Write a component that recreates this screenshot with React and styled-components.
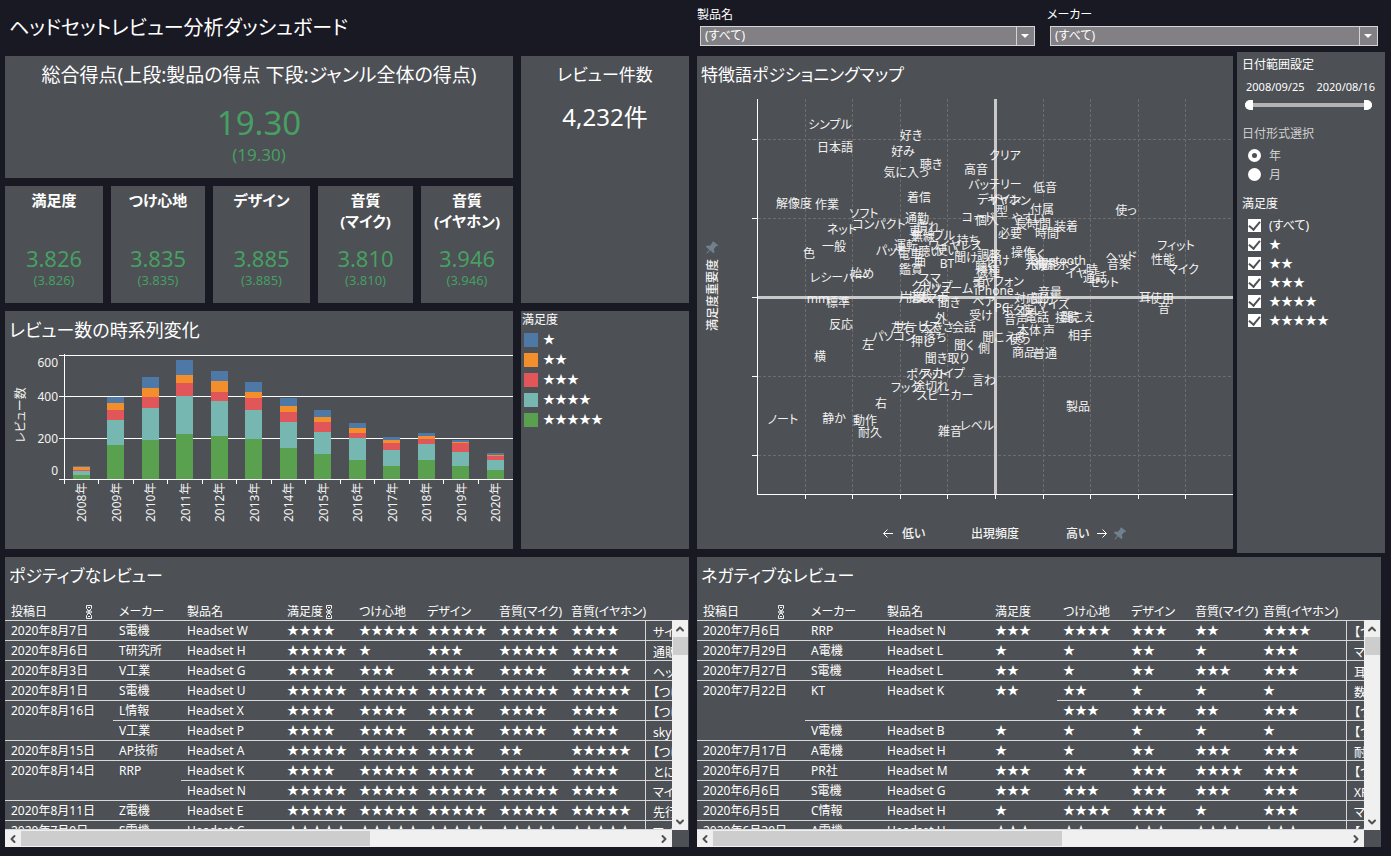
import { useState } from 'react';
import styled, { createGlobalStyle } from 'styled-components';
import { ChevronUp, ChevronDown, ChevronLeft, ChevronRight } from 'lucide-react';

const RATINGS = [1, 2, 3, 4, 5];
const RATING_COLORS = ['#4e79a7', '#f28e2b', '#e15759', '#76b7b2', '#59a14f'];

const stars = (n) => '★'.repeat(n);

const subScores = [
  { name: ['満足度'], value: '3.826' },
  { name: ['つけ心地'], value: '3.835' },
  { name: ['デザイン'], value: '3.885' },
  { name: ['音質', '(マイク)'], value: '3.810' },
  { name: ['音質', '(イヤホン)'], value: '3.946' },
];

// counts go from ★★★★★ at the bottom of the stack to ★ at the top
const reviewCounts = [
  { year: 2008, counts: [21, 19, 5, 15, 5] },
  { year: 2009, counts: [166, 121, 48, 34, 29] },
  { year: 2010, counts: [190, 155, 53, 44, 53] },
  { year: 2011, counts: [219, 184, 63, 39, 73] },
  { year: 2012, counts: [210, 169, 44, 53, 48] },
  { year: 2013, counts: [195, 140, 58, 29, 48] },
  { year: 2014, counts: [152, 126, 44, 29, 39] },
  { year: 2015, counts: [123, 106, 48, 24, 34] },
  { year: 2016, counts: [94, 102, 29, 24, 24] },
  { year: 2017, counts: [65, 73, 34, 15, 15] },
  { year: 2018, counts: [94, 77, 24, 15, 15] },
  { year: 2019, counts: [65, 68, 39, 5, 10] },
  { year: 2020, counts: [45, 48, 19, 5, 10] },
];

const words = [
  ['シンプル', 130, 25], ['日本語', 135, 48], ['好き', 211, 36], ['好み', 203, 52],
  ['聴き', 231, 65], ['気に入っ', 206, 73], ['高音', 276, 70], ['クリア', 305, 56],
  ['バッテリー', 295, 85], ['低音', 345, 88], ['解像度', 94, 104], ['作業', 127, 105],
  ['着信', 219, 98], ['デザイン', 299, 100], ['イヤホン', 309, 101], ['型', 302, 112],
  ['付属', 342, 110], ['使っ', 426, 111], ['ソフト', 164, 114], ['コンパクト', 179, 125],
  ['通勤', 217, 119], ['コード', 278, 118], ['個人', 287, 121], ['やすい', 328, 119],
  ['長時間', 333, 125], ['装着', 366, 127], ['ネット', 142, 130], ['車', 215, 132],
  ['慣れ', 228, 128], ['無線', 223, 137], ['ケーブル', 233, 136], ['必要', 310, 134],
  ['時間', 347, 134], ['一般', 134, 147], ['色', 109, 154], ['パッド', 191, 151],
  ['運転', 206, 146], ['電車', 210, 155], ['聴い', 230, 152], ['曲', 220, 162],
  ['ワイヤレス', 255, 146], ['持ち', 268, 141], ['使い', 247, 151], ['BT', 247, 164],
  ['聞け', 266, 158], ['調整', 289, 156], ['付け', 298, 161], ['操作', 323, 153],
  ['長く', 335, 155], ['Bluetooth', 358, 161], ['充電', 337, 165], ['機能', 347, 165],
  ['ヘッドホン', 353, 166], ['フィット', 476, 146], ['ヘッド', 421, 157], ['音楽', 419, 165],
  ['性能', 463, 160], ['マイク', 483, 170], ['レシーバー', 138, 178], ['始め', 162, 174],
  ['鑑賞', 211, 170], ['スマ', 230, 179], ['クリップ', 232, 187], ['ボリューム', 246, 189],
  ['聴く', 285, 167], ['機種', 288, 172], ['頭', 279, 183], ['イヤフォン', 298, 182],
  ['iPhone', 294, 191], ['イヤ', 376, 174], ['時', 392, 170], ['通話', 395, 178],
  ['セット', 404, 183], ['mm', 118, 199], ['標準', 138, 203], ['片耳', 211, 198],
  ['搭載', 220, 198], ['スマホ', 232, 199], ['聞き', 249, 203], ['ペア', 284, 202],
  ['PC', 302, 208], ['音量', 350, 193], ['対応', 326, 199], ['部分', 343, 199],
  ['サイズ', 353, 205], ['ボタン', 318, 211], ['使い', 333, 211], ['耳', 445, 198],
  ['使用', 462, 199], ['音', 464, 209], ['反応', 141, 225], ['外', 241, 219],
  ['受け', 281, 216], ['音声', 316, 220], ['電話', 337, 218], ['接続', 367, 218],
  ['聞こえ', 378, 218], ['左右', 203, 228], ['サービス', 217, 227], ['大きさ', 237, 228],
  ['会話', 264, 228], ['本体', 329, 231], ['声', 349, 231], ['パソコン', 194, 237],
  ['落ち', 235, 238], ['押し', 222, 242], ['聞こえる', 304, 238], ['使う', 320, 240],
  ['相手', 380, 236], ['左', 168, 245], ['聞く', 264, 246], ['側', 284, 249],
  ['横', 120, 257], ['聞き取り', 247, 259], ['商品', 324, 253], ['普通', 345, 254],
  ['ポケット', 227, 275], ['スカイプ', 243, 274], ['言わ', 284, 281], ['フック', 206, 288],
  ['途切れ', 231, 287], ['スピーカー', 245, 296], ['右', 181, 304], ['製品', 378, 307],
  ['ノート', 83, 320], ['静か', 134, 319], ['動作', 165, 321], ['耐久', 170, 333],
  ['雑音', 250, 332], ['レベル', 277, 326],
];

const headers = ['投稿日', 'メーカー', '製品名', '満足度', 'つけ心地', 'デザイン', '音質(マイク)', '音質(イヤホン)'];

// a cell is a value, or [value, rowSpan]; cells covered by a span above are left out
const positiveRows = [
  ['2020年8月7日', 'S電機', 'Headset W', 4, 5, 5, 5, 4, 'サイズ'],
  ['2020年8月6日', 'T研究所', 'Headset H', 5, 1, 3, 5, 4, '通販'],
  ['2020年8月3日', 'V工業', 'Headset G', 4, 3, 4, 4, 5, 'ヘッド'],
  ['2020年8月1日', 'S電機', 'Headset U', 5, 5, 5, 5, 5, '【つけ心地】'],
  [['2020年8月16日', 2], 'L情報', 'Headset X', 4, 4, 4, 4, 4, '【つけ心地】'],
  ['V工業', 'Headset P', 4, 4, 4, 4, 4, 'skype'],
  ['2020年8月15日', 'AP技術', 'Headset A', 5, 5, 4, 2, 5, '【つけ心地】'],
  [['2020年8月14日', 2], ['RRP', 2], 'Headset K', 4, 5, 4, 4, 4, 'とにかく'],
  ['Headset N', 5, 5, 5, 5, 4, 'マイク'],
  ['2020年8月11日', 'Z電機', 'Headset E', 5, 5, 5, 5, 5, '先行'],
  ['2020年7月9日', 'S電機', 'Headset C', 5, 5, 5, 5, 5, 'マイク'],
];

const negativeRows = [
  ['2020年7月6日', 'RRP', 'Headset N', 3, 4, 3, 2, 4, '【つけ心地】'],
  ['2020年7月29日', 'A電機', 'Headset L', 1, 1, 2, 1, 3, 'マイク'],
  ['2020年7月27日', 'S電機', 'Headset L', 2, 1, 2, 3, 3, '耳'],
  [['2020年7月22日', 3], ['KT', 2], ['Headset K', 2], [2, 2], 2, 1, 1, 1, '数'],
  [3, 3, 2, 3, '【つけ心地】'],
  ['V電機', 'Headset B', 1, 1, 1, 1, 1, '【つけ心地】'],
  ['2020年7月17日', 'A電機', 'Headset H', 1, 1, 2, 3, 3, '耐久'],
  ['2020年6月7日', 'PR社', 'Headset M', 3, 2, 3, 4, 3, '【つけ心地】'],
  ['2020年6月6日', 'S電機', 'Headset G', 3, 3, 3, 3, 3, 'XP'],
  ['2020年6月5日', 'C情報', 'Headset H', 1, 4, 3, 1, 3, 'マイク'],
  ['2020年6月30日', 'A電機', 'Headset U', 3, 2, 3, 4, 3, '【つけ心地】'],
];

const SortIcon = () => (
  <SortSvg width="8" height="14" viewBox="0 0 8 14" aria-hidden="true">
    <path d="M1.5 .5h5v3l-2 2 2 1v1l-2 1 2 2v3h-5v-3l2-2-2-1v-1l2-1-2-2z" />
    <path d="M3 2.5h2M3 11.5h2M3 5l2 4M5 5l-2 4" />
  </SortSvg>
);

const Pin = ({ x, y }) => (
  <g transform={`translate(${x} ${y}) rotate(40)`} fill="#71808f">
    <path d="M-3-6h6v1.5h-1v4l2.500 2v1.500h-4.500v4l-.5 1-.5-1v-4h-4.500v-1.500l2.500-2v-4h-1z" />
  </g>
);

const TimeChart = () => {
  const base = 134;
  const scale = 124 / 600;
  const step = 34.5;
  return (
    <Chart viewBox="0 0 508 204" role="img" aria-label="レビュー数の時系列変化">
      <g stroke="#fff" shapeRendering="crispEdges">
        {[10.5, 51.5, 93.5].map((y) => (
          <path key={y} d={`M54 ${y}H508`} />
        ))}
      </g>
      <g shapeRendering="crispEdges">
        {reviewCounts.map(({ year, counts }, i) => {
          let top = base;
          return counts.map((count, k) => {
            const height = count * scale;
            top -= height;
            return (
              <rect
                key={`${year}-${k}`}
                x={Math.floor(68 + step * i)}
                y={top}
                width="17"
                height={height}
                fill={RATING_COLORS[4 - k]}
              />
            );
          });
        })}
      </g>
      <g stroke="#fff" shapeRendering="crispEdges">
        <path d="M54 134.500H508M59.500 9V139" />
        {reviewCounts.slice(1).map(({ year }, i) => (
          <path key={year} d={`M${Math.floor(59 + step * (i + 1)) + 0.5} 134V139`} />
        ))}
      </g>
      <g textAnchor="end">
        <text x="53" y="22">600</text>
        <text x="53" y="56">400</text>
        <text x="53" y="98">200</text>
        <text x="53" y="130">0</text>
      </g>
      <text transform="translate(20 70) rotate(-90)" textAnchor="middle">レビュー数</text>
      {reviewCounts.map(({ year }, i) => (
        <text key={year} transform={`translate(${81 + step * i} 177) rotate(-90)`}>{year}年</text>
      ))}
    </Chart>
  );
};

const PositionMap = () => (
  <Chart viewBox="-3 -4 536 453" role="img" aria-label="特徴語ポジショニングマップ">
    <g stroke="#6d6e6b" strokeDasharray="3 2" shapeRendering="crispEdges">
      {[105.5, 152.5, 200.5, 247.5, 343.5, 390.5, 438.5, 485.5].map((x) => (
        <path key={x} d={`M${x} -1V394`} />
      ))}
      {[39.5, 118.5, 276.5, 355.5].map((y) => (
        <path key={y} d={`M58 ${y}H533`} />
      ))}
    </g>
    <g stroke="#c9c9c9" strokeWidth="3">
      <path d="M58 197.500H533M295.500 -1V394" />
    </g>
    <g stroke="#fff" shapeRendering="crispEdges">
      <path d="M57.500 -1V394.500H533" fill="none" />
      {[39.5, 118.5, 197.5, 276.5, 355.5].map((y) => (
        <path key={y} d={`M52 ${y}H57`} />
      ))}
      {[105.5, 152.5, 200.5, 247.5, 295.5, 343.5, 390.5, 438.5, 485.5].map((x) => (
        <path key={x} d={`M${x} 395V399`} />
      ))}
    </g>
    <g textAnchor="middle">
      {words.map(([word, x, y]) => (
        <text key={`${word}${x}`} x={x} y={y + 4}>{word}</text>
      ))}
    </g>
    <AxisText>
      <text x="202" y="438">低い</text>
      <text x="271" y="438">出現頻度</text>
      <text x="366" y="438">高い</text>
      <text transform="translate(17 231) rotate(-90)">満足度重要度</text>
    </AxisText>
    <path d="M193 433.500h-9.500m4-4l-4 4 4 4M397 433.500h9.500m-4-4l4 4-4 4" fill="none" stroke="#fff" />
    <Pin x={12} y={148} />
    <Pin x={420} y={434} />
  </Chart>
);

const ReviewTable = ({ title, rows, widths, sorted }) => (
  <ReviewPanel>
    <PanelTitle>{title}</PanelTitle>
    <ScrollGrid>
      <Viewport>
        <Table>
          <colgroup>
            {widths.map((width, i) => (
              <Col key={i} $width={width} />
            ))}
            <Col $width={100} />
          </colgroup>
          <thead>
            <tr>
              {headers.map((header, i) => (
                <Th key={header} scope="col">
                  <HeadCell $spread={i === 0}>
                    {header}
                    {sorted.includes(i) && <SortIcon />}
                  </HeadCell>
                </Th>
              ))}
              <Th aria-label="レビュー" />
            </tr>
          </thead>
          <tbody>
            {rows.map((row, r) => (
              <tr key={r}>
                {row.map((cell, c) => {
                  const [value, span] = Array.isArray(cell) ? cell : [cell, 1];
                  if (c === row.length - 1) return <ReviewCell key={c}>{value}</ReviewCell>;
                  return (
                    <Td key={c} rowSpan={span} $top={span > 1}>
                      {typeof value === 'number' ? stars(value) : value}
                    </Td>
                  );
                })}
              </tr>
            ))}
          </tbody>
        </Table>
      </Viewport>
      <VerticalBar>
        <ScrollButton type="button" aria-label="上へ"><ChevronUp size={12} strokeWidth={4} /></ScrollButton>
        <VerticalThumb />
        <ScrollButton type="button" aria-label="下へ"><ChevronDown size={12} strokeWidth={4} /></ScrollButton>
      </VerticalBar>
      <HorizontalBar>
        <ScrollButton type="button" aria-label="左へ"><ChevronLeft size={12} strokeWidth={4} /></ScrollButton>
        <HorizontalTrack><HorizontalThumb /></HorizontalTrack>
        <ScrollButton type="button" aria-label="右へ"><ChevronRight size={12} strokeWidth={4} /></ScrollButton>
      </HorizontalBar>
    </ScrollGrid>
  </ReviewPanel>
);

const Filters = () => {
  const [format, setFormat] = useState('年');
  const [checked, setChecked] = useState(RATINGS);
  const all = checked.length === RATINGS.length;

  const toggle = (n) =>
    setChecked((prev) => (prev.includes(n) ? prev.filter((v) => v !== n) : [...prev, n]));

  return (
    <FilterPanel>
      <FilterTitle>日付範囲設定</FilterTitle>
      <Dates>
        <span>2008/09/25</span>
        <span>2020/08/16</span>
      </Dates>
      <RangeTrack>
        <Range type="range" min="0" max="100" defaultValue="0" aria-label="開始日" $side="start" />
        <Range type="range" min="0" max="100" defaultValue="100" aria-label="終了日" $side="end" />
      </RangeTrack>
      <FilterGroup $gap={18}>
        <FilterLegend $muted>日付形式選択</FilterLegend>
        {['年', '月'].map((value) => (
          <Option key={value} $muted>
            <Radio name="format" checked={format === value} onChange={() => setFormat(value)} />
            {value}
          </Option>
        ))}
      </FilterGroup>
      <FilterGroup $gap={11}>
        <FilterLegend>満足度</FilterLegend>
        <Option>
          <Check checked={all} onChange={() => setChecked(all ? [] : RATINGS)} />
          (すべて)
        </Option>
        {RATINGS.map((n) => (
          <Option key={n}>
            <Check checked={checked.includes(n)} onChange={() => toggle(n)} />
            {stars(n)}
          </Option>
        ))}
      </FilterGroup>
    </FilterPanel>
  );
};

const App = () => (
  <>
    <GlobalStyle />
    <Page>
      <Column $grow={684}>
        <Header>
          <PageTitle>ヘッドセットレビュー分析ダッシュボード</PageTitle>
        </Header>
        <SummaryGrid>
          <Scores>
            <TotalPanel>
              <CenterTitle $size={19}>総合得点(上段:製品の得点 下段:ジャンル全体の得点)</CenterTitle>
              <TotalValue>19.30</TotalValue>
              <TotalNote>(19.30)</TotalNote>
            </TotalPanel>
            <SubScores>
              {subScores.map(({ name, value }) => (
                <SubPanel key={value}>
                  <SubName>{name.map((line) => <span key={line}>{line}</span>)}</SubName>
                  <SubValue>{value}</SubValue>
                  <SubNote>({value})</SubNote>
                </SubPanel>
              ))}
            </SubScores>
          </Scores>
          <CountPanel>
            <CenterTitle>レビュー件数</CenterTitle>
            <CountValue>4,232件</CountValue>
          </CountPanel>
          <Panel>
            <ChartTitle $size={18}>レビュー数の時系列変化</ChartTitle>
            <TimeChart />
          </Panel>
          <Panel>
            <LegendTitle>満足度</LegendTitle>
            <LegendList>
              {RATINGS.map((n) => (
                <li key={n}>
                  <Swatch $color={RATING_COLORS[n - 1]} />
                  {stars(n)}
                </li>
              ))}
            </LegendList>
          </Panel>
        </SummaryGrid>
        <ReviewTable
          title="ポジティブなレビュー"
          rows={positiveRows}
          widths={[108, 68, 100, 72, 68, 72, 72, 80]}
          sorted={[0, 3]}
        />
      </Column>
      <Column $grow={688}>
        <SelectBar>
          <Field>
            製品名
            <SelectBox>
              <Select><option>(すべて)</option></Select>
            </SelectBox>
          </Field>
          <Field>
            メーカー
            <SelectBox>
              <Select><option>(すべて)</option></Select>
            </SelectBox>
          </Field>
        </SelectBar>
        <MapRow>
          <MapPanel>
            <PanelTitle>特徴語ポジショニングマップ</PanelTitle>
            <PositionMap />
          </MapPanel>
          <Filters />
        </MapRow>
        <TableInset>
          <ReviewTable
            title="ネガティブなレビュー"
            rows={negativeRows}
            widths={[108, 76, 108, 68, 68, 64, 68, 89]}
            sorted={[0]}
          />
        </TableInset>
      </Column>
    </Page>
  </>
);

const GlobalStyle = createGlobalStyle`
  * {
    box-sizing: border-box;
  }

  body {
    margin: 0;
    background: #191924;
    color: #fff;
    font-family: 'Noto Sans', 'Noto Sans CJK JP', sans-serif;
    font-size: 12px;
    line-height: 20px;
    font-feature-settings: 'palt';
  }
`;

const Page = styled.main`
  display: flex;
  gap: 8px;
  padding: 0 6px 8px 5px;
`;

const Column = styled.div`
  flex: ${({ $grow }) => $grow} 1 0;
  min-width: 0;
`;

const Header = styled.header`
  display: flex;
  align-items: center;
  height: 56px;
`;

const PageTitle = styled.h1`
  margin: 0 4px;
  font-size: 20px;
  font-weight: 400;
  line-height: 32px;
  white-space: nowrap;
`;

const SummaryGrid = styled.div`
  display: grid;
  grid-template-columns: minmax(0, 508fr) minmax(0, 168fr);
  gap: 8px;
  margin-bottom: 8px;
`;

const Panel = styled.section`
  background: #4d5054;
  overflow: hidden;
`;

const Scores = styled.div`
  display: flex;
  flex-direction: column;
  gap: 8px;
`;

const TotalPanel = styled(Panel)`
  height: 122px;
  text-align: center;
`;

const CountPanel = styled(Panel)`
  text-align: center;
`;

const PanelTitle = styled.h2`
  margin: 0;
  padding: 5px 4px 0;
  height: 40px;
  font-size: ${({ $size = 17 }) => $size}px;
  font-weight: 400;
  line-height: 28px;
  white-space: nowrap;
`;

const ChartTitle = styled(PanelTitle)`
  height: 34px;
`;

const CenterTitle = styled(PanelTitle)`
  padding: 5px 0 0;
`;

const TotalValue = styled.div`
  padding-top: 4px;
  color: #479f62;
  font-size: 33px;
  line-height: 46px;
`;

const TotalNote = styled.div`
  color: #479f62;
  font-size: 17px;
  line-height: 18px;
`;

const CountValue = styled.div`
  font-size: 24px;
  line-height: 42px;
`;

const SubScores = styled.div`
  display: grid;
  grid-template-columns: 98fr 94fr 97fr 95fr 92fr;
  gap: 8px;
`;

const SubPanel = styled(Panel)`
  height: 117px;
  padding-top: 4px;
  text-align: center;
`;

const SubName = styled.h3`
  display: flex;
  flex-direction: column;
  height: 52px;
  margin: 0;
  font-size: 15px;
  font-weight: 700;
  line-height: 21px;
`;

const SubValue = styled.div`
  color: #479f62;
  font-size: 22px;
  line-height: 32px;
`;

const SubNote = styled.div`
  color: #479f62;
  font-size: 13px;
  line-height: 12px;
`;

const Chart = styled.svg`
  display: block;
  width: 100%;
  height: auto;

  text {
    fill: #f2f2f2;
    font-size: 12px;
  }
`;

const AxisText = styled.g`
  font-weight: 500;
`;

const LegendTitle = styled.h3`
  margin: 0;
  padding: 0 1px;
  font-size: 12px;
  font-weight: 400;
  line-height: 18px;
`;

const LegendList = styled.ul`
  margin: 0;
  padding: 1px 3px;
  list-style: none;

  li {
    display: flex;
    align-items: center;
    gap: 5px;
    height: 20px;
  }
`;

const Swatch = styled.span`
  width: 14px;
  height: 14px;
  background: ${({ $color }) => $color};
`;

const SelectBar = styled.div`
  display: grid;
  grid-template-columns: 350fr 338fr;
  height: 52px;
`;

const Field = styled.label`
  display: flex;
  flex-direction: column;
  padding: 5px 7px 0 0;

  &:first-child {
    padding-right: 12px;
  }
`;

const SelectBox = styled.span`
  display: flex;
  position: relative;
  margin: 1px 0 0 3px;

  &::before {
    content: '';
    position: absolute;
    top: 0;
    right: 18px;
    width: 1px;
    height: 100%;
    background: #d4d4d4;
  }

  &::after {
    content: '';
    position: absolute;
    top: 8px;
    right: 6px;
    border: 4px solid transparent;
    border-top-color: #fff;
    border-bottom: 0;
  }
`;

const Select = styled.select`
  appearance: none;
  width: 100%;
  height: 20px;
  padding: 0 24px 0 4px;
  border: 1px solid #d4d4d4;
  border-radius: 0;
  background: #828085;
  color: #fff;
  font: inherit;
  font-size: 12px;
  line-height: 16px;
`;

const MapRow = styled.div`
  display: grid;
  grid-template-columns: minmax(0, 536fr) minmax(0, 148fr);
  gap: 4px;
  margin-bottom: 4px;
`;

const MapPanel = styled(Panel)`
  margin: 4px 0;
`;

const FilterPanel = styled(Panel)`
  padding: 3px 5px;
`;

const FilterTitle = styled.h3`
  margin: 0;
  font-size: 12px;
  font-weight: 400;
  line-height: 20px;
`;

const Dates = styled.div`
  display: flex;
  justify-content: space-between;
  padding: 2px 5px 0 4px;
  font-size: 11px;
`;

const RangeTrack = styled.div`
  position: relative;
  height: 4px;
  margin: 6px 8px 0 3px;
  background: #b3b3b3;
`;

const Range = styled.input`
  appearance: none;
  position: absolute;
  top: -3px;
  left: 0;
  width: 100%;
  height: 10px;
  margin: 0;
  background: none;
  pointer-events: none;

  &::-webkit-slider-thumb {
    appearance: none;
    width: 8px;
    height: 10px;
    border: 0;
    border-radius: ${({ $side }) => ($side === 'start' ? '5px 0 0 5px' : '0 5px 5px 0')};
    background: #fff;
    pointer-events: auto;
  }
`;

const FilterGroup = styled.fieldset`
  min-width: 0;
  margin: ${({ $gap }) => $gap}px 0 0;
  padding: 0;
  border: 0;
`;

const FilterLegend = styled.legend`
  padding: 0;
  color: ${({ $muted }) => ($muted ? '#d0d0d0' : '#fff')};
  line-height: 18px;
  margin-bottom: 3px;
`;

const Option = styled.label`
  display: flex;
  align-items: center;
  gap: 8px;
  height: 19px;
  padding-left: 6px;
  color: ${({ $muted }) => ($muted ? '#d0d0d0' : '#fff')};
`;

const Radio = styled.input.attrs({ type: 'radio' })`
  appearance: none;
  width: 13px;
  height: 13px;
  margin: 0;
  border-radius: 50%;
  background: #fff;

  &:checked {
    border: 4px solid #fff;
    background: #4d5054;
  }
`;

const Check = styled.input.attrs({ type: 'checkbox' })`
  appearance: none;
  display: grid;
  place-items: center;
  width: 13px;
  height: 13px;
  margin: 0;
  background: #fff;

  &:checked::after {
    content: '';
    width: 5px;
    height: 9px;
    margin-bottom: 2px;
    border: solid #4d5054;
    border-width: 0 2px 2px 0;
    transform: rotate(40deg);
  }
`;

const TableInset = styled.div`
  padding-right: 4px;
`;

const ReviewPanel = styled(Panel)`
  height: 290px;
`;

const ScrollGrid = styled.div`
  display: grid;
  grid-template-columns: minmax(0, 1fr) 17px;
  grid-template-rows: 233px 17px;
`;

const Viewport = styled.div`
  overflow: hidden;
  padding-top: 3px;
  border-bottom: 1px solid #d5d7d8;
`;

const Table = styled.table`
  width: 100%;
  table-layout: fixed;
  border-collapse: separate;
  border-spacing: 0;
  border-right: 1px solid #e4e4e4;
`;

const Col = styled.col`
  width: ${({ $width }) => $width}px;
`;

const Th = styled.th`
  height: 21px;
  padding: 3px 0 0 6px;
  border-bottom: 1px solid #d5d7d8;
  font-weight: 400;
  line-height: 17px;
  text-align: left;
  white-space: nowrap;
`;

const HeadCell = styled.span`
  display: flex;
  align-items: center;
  justify-content: ${({ $spread }) => ($spread ? 'space-between' : 'flex-start')};
  gap: 2px;
  padding-right: ${({ $spread }) => ($spread ? '20px' : '0')};
`;

const SortSvg = styled.svg`
  fill: none;
  stroke: #f2f2f2;
  stroke-width: 1;
`;

const Td = styled.td`
  height: 20px;
  padding: 0 0 0 6px;
  border-bottom: 1px solid #d5d7d8;
  line-height: 19px;
  vertical-align: ${({ $top }) => ($top ? 'top' : 'middle')};
  white-space: nowrap;
`;

const ReviewCell = styled.td`
  height: 20px;
  padding: 4px 0 0 7px;
  border-bottom: 1px solid #d5d7d8;
  border-left: 1px solid #d5d7d8;
  line-height: 15px;
  overflow: hidden;
  white-space: nowrap;
`;

const VerticalBar = styled.div`
  display: flex;
  flex-direction: column;
  margin: 23px 1px 0 0;
  background: #f0f0f0;

  button:last-child {
    margin-top: auto;
  }
`;

const VerticalThumb = styled.div`
  height: 18px;
  margin-left: 1px;
  background: #cdcdcd;
`;

const HorizontalBar = styled.div`
  display: flex;
  background: #f0f0f0;
`;

const HorizontalTrack = styled.div`
  flex: 1;
  padding: 1px 0;
`;

const HorizontalThumb = styled.div`
  width: 55%;
  height: 100%;
  background: #cdcdcd;
`;

const ScrollButton = styled.button`
  display: flex;
  align-items: center;
  justify-content: center;
  flex: none;
  width: 16px;
  height: 17px;
  padding: 0;
  border: 0;
  background: none;
  color: #505050;
`;

export default App;
